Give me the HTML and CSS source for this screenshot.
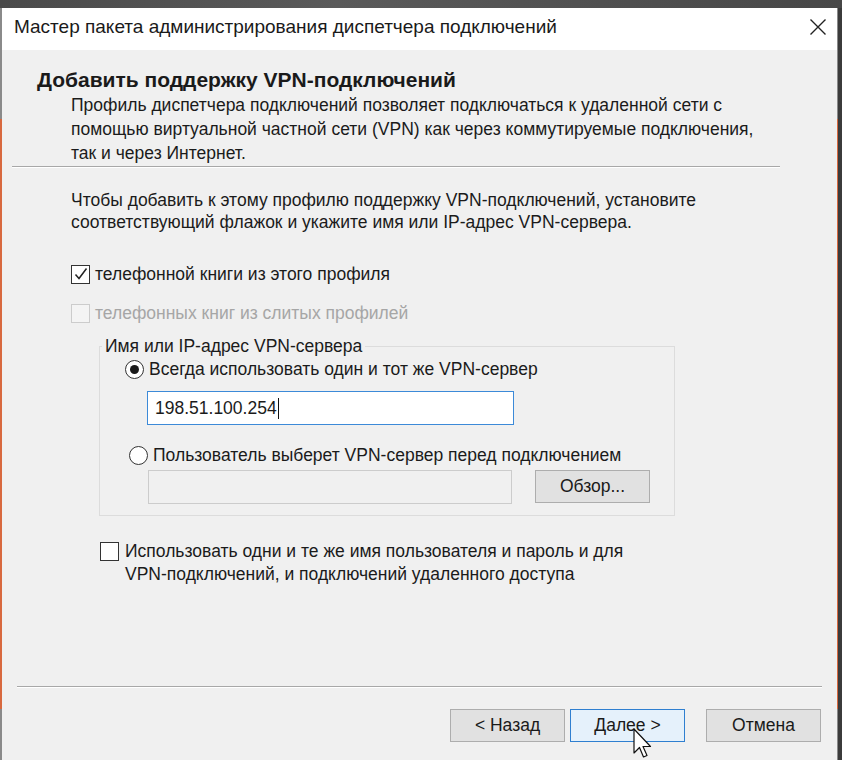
FILE: index.html
```html
<!DOCTYPE html>
<html lang="ru">
<head>
<meta charset="utf-8">
<title>Мастер пакета администрирования диспетчера подключений</title>
<link rel="stylesheet" href="styles.css">
</head>
<body>
<div class="topstrip"></div>
<div class="window">
  <div class="titlebar">
    <span class="title">Мастер пакета администрирования диспетчера подключений</span>
    <span class="close">
      <svg width="18" height="18" viewBox="0 0 18 18"><path d="M1.5 1.5 L16.5 16.5 M16.5 1.5 L1.5 16.5" stroke="#222" stroke-width="1.4" fill="none"/></svg>
    </span>
  </div>
  <div class="body">
    <div class="heading">Добавить поддержку VPN-подключений</div>
    <div class="desc">Профиль диспетчера подключений позволяет подключаться к удаленной сети с<br>помощью виртуальной частной сети (VPN) как через коммутируемые подключения,<br>так и через Интернет.</div>
    <div class="sep sep-top"></div>
    <div class="intro">Чтобы добавить к этому профилю поддержку VPN-подключений, установите<br>соответствующий флажок и укажите имя или IP-адрес VPN-сервера.</div>
    <div class="cbrow row1">
      <span class="cb checked"><svg width="16" height="16" viewBox="0 0 16 16"><path d="M2.5 8.5 L6 12.5 L13.5 2.5" stroke="#222" stroke-width="1.5" fill="none"/></svg></span>
      <span>телефонной книги из этого профиля</span>
    </div>
    <div class="cbrow row2 disabled">
      <span class="cb off"></span>
      <span>телефонных книг из слитых профилей</span>
    </div>
    <fieldset class="group">
      <legend>Имя или IP-адрес VPN-сервера</legend>
      <div class="radiorow r1">
        <span class="radio on"><span class="dot"></span></span>
        <span>Всегда использовать один и тот же VPN-сервер</span>
      </div>
      <div class="input active"><span>198.51.100.254</span><span class="caret"></span></div>
      <div class="radiorow r2">
        <span class="radio"></span>
        <span>Пользователь выберет VPN-сервер перед подключением</span>
      </div>
      <div class="browse-row">
        <div class="input dis"></div>
        <div class="btn browse">Обзор...</div>
      </div>
    </fieldset>
    <div class="cbrow row3">
      <span class="cb"></span>
      <span class="lbl2">Использовать одни и те же имя пользователя и пароль и для<br>VPN-подключений, и подключений удаленного доступа</span>
    </div>
    <div class="spacer"></div>
    <div class="sep sep-bottom"></div>
    <div class="buttons">
      <div class="btn">&lt; Назад</div>
      <div class="btn default">Далее &gt;
        <svg class="cursor" width="22" height="34" viewBox="0 0 22 34"><path d="M1 1 L1 25 L6.5 19.5 L10.5 29 L14 27.5 L10 18.5 L17.5 18.5 Z" fill="#fff" stroke="#111" stroke-width="1.2" stroke-linejoin="round"/></svg>
      </div>
      <div class="btn cancel">Отмена</div>
    </div>
  </div>
</div>
</body>
</html>
```
FILE: styles.css
```css
html, body {
  margin: 0;
  padding: 0;
}
body {
  width: 842px;
  height: 760px;
  overflow: hidden;
  background: #3b3b3b;
  font-family: "Liberation Sans", Arial, sans-serif;
  color: #1b1b1b;
}
.topstrip {
  height: 8px;
  background: linear-gradient(to right, #4a4a4a, #5a5a5a 40%, #474747);
}
.window {
  width: 838px;
  height: 752px;
  box-sizing: border-box;
  background: #f0f0f0;
  border-left: 2px solid #808080;
  border-right: 1px solid #8a8a8a;
  border-image: linear-gradient(to bottom, #8a8a8a 0, #8a8a8a 112px, #d8693f 112px, #d8693f 700px, #8a8a8a 700px) 1;
  display: flex;
  flex-direction: column;
}
.titlebar {
  height: 42px;
  box-sizing: border-box;
  flex: none;
  background: #ffffff;
  display: flex;
  align-items: center;
  padding: 0 10px 4px 12px;
}
.title {
  font-size: 19px;
  color: #1a1a1a;
  flex: 1;
}
.close {
  width: 18px;
  height: 18px;
  display: flex;
}
.body {
  flex: 1;
  display: flex;
  flex-direction: column;
  position: relative;
}
.heading {
  margin: 18px 0 0 35px;
  font-weight: bold;
  font-size: 21px;
  line-height: 24px;
  color: #1a1a1a;
}
.desc {
  margin: 1px 0 0 69px;
  font-size: 17.5px;
  line-height: 24px;
  white-space: nowrap;
}
.sep {
  height: 1px;
  background: #a8a8a8;
  border-bottom: 1px solid #ffffff;
}
.sep-top {
  margin: 1px 0 0 10px;
  width: 768px;
}
.intro {
  margin: 21px 0 0 69px;
  font-size: 17.5px;
  line-height: 22px;
  white-space: nowrap;
}
.cbrow {
  display: flex;
  align-items: center;
  gap: 5px;
  font-size: 17.5px;
  line-height: 22px;
  white-space: nowrap;
}
.row1 {
  margin: 30px 0 0 69px;
}
.row2 {
  margin: 17px 0 0 69px;
}
.disabled {
  color: #a6a6a6;
}
.cb {
  width: 17px;
  height: 17px;
  border: 1px solid #333333;
  background: #ffffff;
  display: flex;
  align-items: center;
  justify-content: center;
  flex: none;
}
.cb.off {
  border-color: #cccccc;
  background: #f4f4f4;
}
.group {
  margin: 12px 0 0 97px;
  width: 576px;
  box-sizing: border-box;
  border: 1px solid #dcdcdc;
  padding: 0 0 11px 0;
  min-width: 0;
}
.group legend {
  font-size: 17.5px;
  line-height: 20px;
  padding: 0 3px;
  margin-left: 2px;
  white-space: nowrap;
}
.radiorow {
  display: flex;
  align-items: center;
  gap: 5px;
  font-size: 17.5px;
  line-height: 22px;
  white-space: nowrap;
}
.r1 {
  margin: 2px 0 0 25px;
}
.r2 {
  margin: 19px 0 0 29px;
}
.radio {
  width: 17px;
  height: 17px;
  border: 1px solid #333333;
  border-radius: 50%;
  background: #ffffff;
  display: flex;
  align-items: center;
  justify-content: center;
  flex: none;
}
.radio .dot {
  width: 9px;
  height: 9px;
  border-radius: 50%;
  background: #1a1a1a;
}
.input {
  height: 34px;
  box-sizing: border-box;
  border: 1px solid #7a7a7a;
  background: #ffffff;
  display: flex;
  align-items: center;
  padding-left: 7px;
  font-size: 17.5px;
}
.input.active {
  margin: 11px 0 0 47px;
  width: 367px;
  border-color: #3c8ad8;
}
.caret {
  width: 1px;
  height: 21px;
  background: #111;
  margin-left: 1px;
}
.browse-row {
  display: flex;
  align-items: flex-start;
  margin: 4px 0 0 48px;
  gap: 23px;
}
.input.dis {
  width: 364px;
  border-color: #cccccc;
  background: #f0f0f0;
}
.btn {
  width: 115px;
  height: 33px;
  box-sizing: border-box;
  border: 1px solid #adadad;
  background: #e1e1e1;
  display: flex;
  align-items: center;
  justify-content: center;
  font-size: 17.5px;
  color: #1a1a1a;
  position: relative;
}
.row3 {
  margin: 24px 0 0 98px;
  align-items: flex-start;
  gap: 6px;
}
.row3 .cb {
  margin-top: 2px;
}
.lbl2 {
  line-height: 23px;
}
.spacer {
  flex: 1;
}
.sep-bottom {
  margin-left: 15px;
  width: 805px;
}
.buttons {
  display: flex;
  justify-content: flex-end;
  gap: 5px;
  margin: 21px 16px 18px 0;
}
.btn.default {
  border-color: #2f7fd0;
  background: #e5f1fb;
}
.btn.cancel {
  margin-left: 16px;
}
.cursor {
  position: absolute;
  left: 62px;
  top: 18px;
}
```
